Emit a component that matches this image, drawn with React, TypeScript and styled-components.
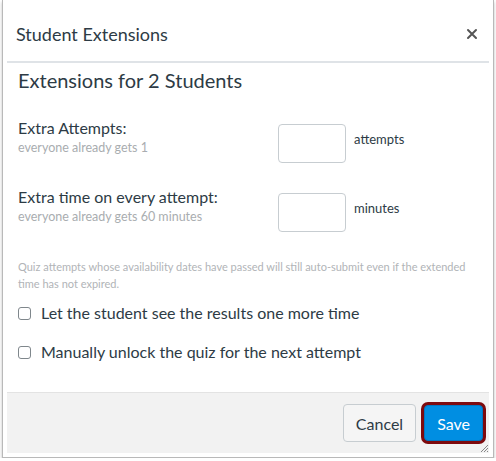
import styled, { createGlobalStyle } from "styled-components";

const GlobalStyle = createGlobalStyle`
  html, body {
    margin: 0;
    padding: 0;
    background: #ffffff;
    font-family: Lato, "Open Sans", "Liberation Sans", sans-serif;
    color: #2d3b45;
  }
`;

const Dialog = styled.div`
  position: relative;
  box-sizing: border-box;
  margin-left: 2px;
  width: 492px;
  height: 458px;
  display: flex;
  flex-direction: column;
  padding: 0 4px 4px 4px;
  background: #ffffff;
  border: 1px solid #b9b9b9;
  border-top: none;
  box-shadow: 0 2px 3px rgba(0, 0, 0, 0.25);
`;

const Header = styled.div`
  box-sizing: border-box;
  height: 63px;
  display: flex;
  align-items: center;
  justify-content: space-between;
  padding: 7px 11px 0 9px;
  border-bottom: 2px solid #dfe3e7;
`;

const Title = styled.h1`
  margin: 0;
  font-size: 18px;
  font-weight: 400;
  line-height: 24px;
`;

const CloseButton = styled.button`
  border: none;
  background: none;
  padding: 0;
  width: 12px;
  height: 12px;
  display: flex;
  cursor: pointer;
`;

const Content = styled.div`
  flex: 1;
  padding: 5px 8px 0 11px;
`;

const Heading = styled.h2`
  margin: 0 0 26px;
  font-size: 20px;
  font-weight: 400;
  line-height: 24px;
`;

const FieldRow = styled.div<{ $gap: number }>`
  display: grid;
  grid-template-columns: 260px auto;
  align-items: start;
  margin-bottom: ${(p) => p.$gap}px;
`;

const Label = styled.div`
  font-size: 16px;
  line-height: 20px;
`;

const Hint = styled.div`
  font-size: 12.5px;
  line-height: 20px;
  color: #a9adb0;
`;

const InputGroup = styled.div`
  display: flex;
  align-items: flex-start;
  gap: 8px;
  padding-top: 6px;
`;

const NumberInput = styled.input`
  box-sizing: border-box;
  width: 68px;
  height: 39px;
  border: 1px solid #c7cdd1;
  border-radius: 4px;
  background: #ffffff;
  font: inherit;
`;

const Unit = styled.span`
  font-size: 13px;
  line-height: 18px;
  margin-top: 6px;
`;

const Note = styled.p`
  margin: 0 0 10px;
  font-size: 11px;
  line-height: 17px;
  color: #b1b4b7;
`;

const CheckRow = styled.label`
  display: flex;
  align-items: center;
  gap: 10px;
  font-size: 16px;
  line-height: 22px;
  margin-bottom: 17px;
`;

const Box = styled.span`
  box-sizing: border-box;
  width: 13px;
  height: 13px;
  border: 1px solid #7f878c;
  border-radius: 3px;
  background: #ffffff;
`;

const Footer = styled.div`
  box-sizing: border-box;
  height: 61px;
  display: flex;
  align-items: center;
  justify-content: flex-end;
  gap: 8px;
  padding: 0 6px 0 0;
  background: #f2f2f2;
  border-top: 1px solid #e3e3e3;
`;

const Button = styled.button<{ $primary?: boolean }>`
  box-sizing: border-box;
  height: ${(p) => (p.$primary ? 36 : 38)}px;
  padding: 0 12px;
  border-radius: 4px;
  font-family: inherit;
  font-size: 16px;
  border: 1px solid ${(p) => (p.$primary ? "#0077c2" : "#c7cdd1")};
  background: ${(p) => (p.$primary ? "#008ee2" : "#f5f5f5")};
  color: ${(p) => (p.$primary ? "#ffffff" : "#2d3b45")};
  box-shadow: ${(p) => (p.$primary ? "0 0 0 3px #7d0a0e" : "none")};
  cursor: pointer;
`;

const Grip = styled.svg`
  position: absolute;
  right: 4px;
  bottom: 4px;
`;

export default function App() {
  return (
    <>
      <GlobalStyle />
      <Dialog>
        <Header>
          <Title>Student Extensions</Title>
          <CloseButton aria-label="Close">
            <svg width="12" height="12" viewBox="0 0 12 12">
              <path d="M2 2 L10 10 M10 2 L2 10" stroke="#555" strokeWidth="2" strokeLinecap="round" />
            </svg>
          </CloseButton>
        </Header>
        <Content>
          <Heading>Extensions for 2 Students</Heading>
          <FieldRow $gap={24}>
            <div>
              <Label>Extra Attempts:</Label>
              <Hint>everyone already gets 1</Hint>
            </div>
            <InputGroup>
              <NumberInput type="text" />
              <Unit>attempts</Unit>
            </InputGroup>
          </FieldRow>
          <FieldRow $gap={26}>
            <div>
              <Label>Extra time on every attempt:</Label>
              <Hint>everyone already gets 60 minutes</Hint>
            </div>
            <InputGroup>
              <NumberInput type="text" />
              <Unit>minutes</Unit>
            </InputGroup>
          </FieldRow>
          <Note>
            Quiz attempts whose availability dates have passed will still auto-submit even if the extended time has not expired.
          </Note>
          <CheckRow>
            <Box />
            Let the student see the results one more time
          </CheckRow>
          <CheckRow>
            <Box />
            Manually unlock the quiz for the next attempt
          </CheckRow>
        </Content>
        <Footer>
          <Button>Cancel</Button>
          <Button $primary>Save</Button>
        </Footer>
        <Grip width="10" height="10" viewBox="0 0 10 10">
          <path d="M9 2 L2 9 M9 5 L5 9 M9 8 L8 9" stroke="#888" strokeWidth="1" />
        </Grip>
      </Dialog>
    </>
  );
}
